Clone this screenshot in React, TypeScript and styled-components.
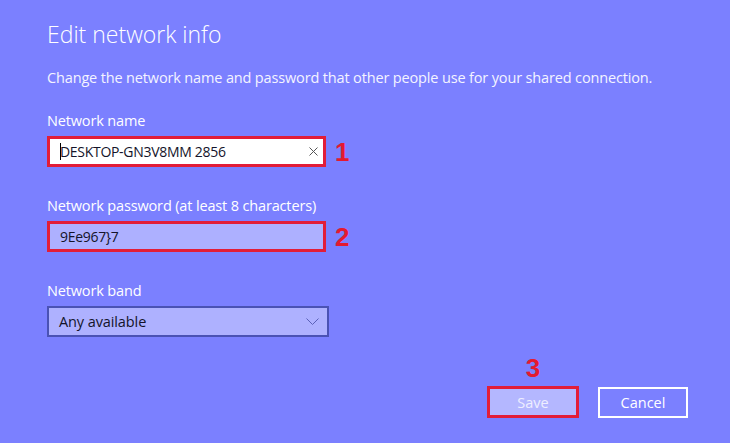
import React from "react";
import styled, { createGlobalStyle } from "styled-components";

const GlobalStyle = createGlobalStyle`
  html, body {
    margin: 0;
    padding: 0;
    background: #7b80ff;
  }
  body {
    font-family: "Open Sans", "Noto Sans", "Liberation Sans", sans-serif;
  }
  * { box-sizing: border-box; }
`;

const Page = styled.div`
  width: 730px;
  height: 443px;
  background: #7b80ff;
  padding: 19px 42px 0 47px;
  color: #ffffff;
  display: flex;
  flex-direction: column;
`;

const Title = styled.h1`
  margin: 0;
  font-size: 23px;
  font-weight: 300;
  line-height: 30px;
  color: #ffffff;
`;

const Description = styled.p`
  margin: 19px 0 0;
  font-size: 14.5px;
  letter-spacing: -0.15px;
  line-height: 20px;
  color: #f4f4ff;
`;

const Field = styled.div<{ $top: number }>`
  margin-top: ${(p) => p.$top}px;
  display: flex;
  flex-direction: column;
  gap: 6px;
`;

const Label = styled.label`
  font-size: 14.5px;
  letter-spacing: -0.15px;
  line-height: 18px;
  color: #ffffff;
`;

const Row = styled.div`
  display: flex;
  align-items: center;
  gap: 9px;
`;

const Marker = styled.span`
  font-family: "Liberation Sans", Arial, sans-serif;
  font-weight: 700;
  font-size: 26px;
  line-height: 24px;
  color: #e41a30;
`;

const Highlight = styled.div`
  border: 3px solid #e21d38;
  display: flex;
`;

const TextBox = styled.div<{ $fill: string }>`
  width: 273px;
  height: 25px;
  background: ${(p) => p.$fill};
  display: flex;
  align-items: center;
  padding: 0 5px 0 10px;
  font-size: 14px;
  letter-spacing: -0.3px;
  color: #14142a;
`;

const Caret = styled.span`
  display: inline-block;
  width: 1px;
  height: 17px;
  background: #000;
  margin-right: -1px;
`;

const Value = styled.span`
  flex: 1;
  white-space: nowrap;
`;

const Clear = styled.svg`
  width: 9px;
  height: 9px;
`;

const Select = styled.div`
  width: 282px;
  height: 31px;
  border: 2px solid #4a52b4;
  background: #aeb1ff;
  display: flex;
  align-items: center;
  padding: 0 8px 0 10px;
  font-size: 14.5px;
  letter-spacing: -0.1px;
  color: #14142a;
`;

const Chevron = styled.svg`
  width: 13px;
  height: 7px;
`;

const Footer = styled.div`
  margin-top: auto;
  margin-bottom: 25px;
  display: flex;
  justify-content: flex-end;
  align-items: flex-end;
  gap: 19px;
`;

const SaveColumn = styled.div`
  display: flex;
  flex-direction: column;
  align-items: center;
  gap: 6px;
`;

const Button = styled.button<{ $variant: "primary" | "secondary" }>`
  font-family: inherit;
  font-size: 14.5px;
  width: ${(p) => (p.$variant === "primary" ? "86px" : "90px")};
  height: ${(p) => (p.$variant === "primary" ? "26px" : "31px")};
  border: ${(p) => (p.$variant === "primary" ? "none" : "2px solid #ffffff")};
  background: ${(p) => (p.$variant === "primary" ? "#b4b7ff" : "transparent")};
  color: ${(p) => (p.$variant === "primary" ? "#eeeeff" : "#ffffff")};
  padding: 0;
  cursor: pointer;
`;

export default function App() {
  return (
    <>
      <GlobalStyle />
      <Page>
        <Title>Edit network info</Title>
        <Description>
          Change the network name and password that other people use for your shared connection.
        </Description>

        <Field $top={24}>
          <Label>Network name</Label>
          <Row>
            <Highlight>
              <TextBox $fill="#ffffff">
                <Caret />
                <Value>DESKTOP-GN3V8MM 2856</Value>
                <Clear viewBox="0 0 9 9">
                  <path d="M0.5 0.5 L8.5 8.5 M8.5 0.5 L0.5 8.5" stroke="#555" strokeWidth="1" />
                </Clear>
              </TextBox>
            </Highlight>
            <Marker>1</Marker>
          </Row>
        </Field>

        <Field $top={30}>
          <Label>Network password (at least 8 characters)</Label>
          <Row>
            <Highlight>
              <TextBox $fill="#adb0ff">
                <Value>{"9Ee967}7"}</Value>
              </TextBox>
            </Highlight>
            <Marker>2</Marker>
          </Row>
        </Field>

        <Field $top={30}>
          <Label>Network band</Label>
          <Select>
            <Value>Any available</Value>
            <Chevron viewBox="0 0 13 7">
              <path d="M0.5 0.5 L6.5 6.5 L12.5 0.5" fill="none" stroke="#5a60b8" strokeWidth="1" />
            </Chevron>
          </Select>
        </Field>

        <Footer>
          <SaveColumn>
            <Marker>3</Marker>
            <Highlight>
              <Button $variant="primary">Save</Button>
            </Highlight>
          </SaveColumn>
          <Button $variant="secondary">Cancel</Button>
        </Footer>
      </Page>
    </>
  );
}
